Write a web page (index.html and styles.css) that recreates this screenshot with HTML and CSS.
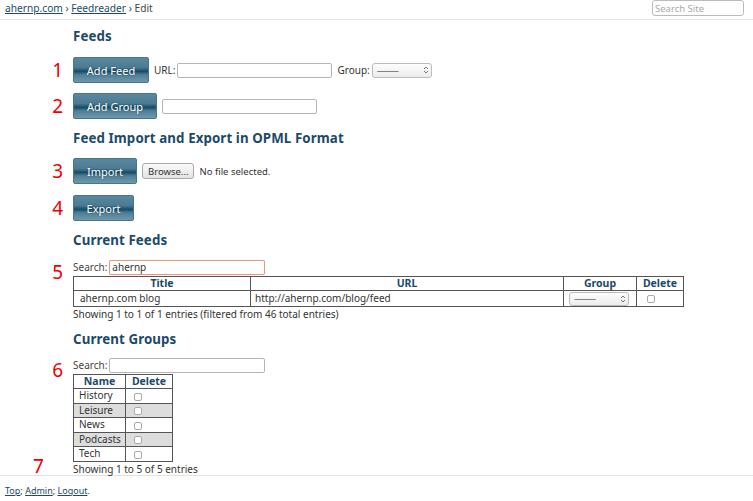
FILE: index.html
```html
<!DOCTYPE html>
<html>
<head>
<meta charset="utf-8">
<link rel="stylesheet" href="styles.css">
</head>
<body>
<header class="topbar">
  <nav class="crumbs"><a href="#">ahernp.com</a> › <a href="#">Feedreader</a> › Edit</nav>
  <input class="site-search" type="text" placeholder="Search Site">
</header>
<main class="content">
  <h2 class="h-feeds">Feeds</h2>
  <div class="row r1"><span class="num">1</span><span class="btn w-addfeed">Add Feed</span><span class="lbl">URL:</span><span class="field url-field"></span><span class="lbl">Group:</span><span class="select">———<svg width="6" height="10" viewBox="0 0 6 10"><path d="M1 4 L3 2 L5 4 M1 6 L3 8 L5 6" fill="none" stroke="#777" stroke-width="1"/></svg></span></div>
  <div class="row r2"><span class="num">2</span><span class="btn w-addgroup">Add Group</span><span class="field group-field"></span></div>
  <h2 class="h-import">Feed Import and Export in OPML Format</h2>
  <div class="row r3"><span class="num">3</span><span class="btn w-import">Import</span><span class="browse">Browse...</span><span class="nofile">No file selected.</span></div>
  <div class="row r4"><span class="num">4</span><span class="btn w-export">Export</span></div>
  <h2 class="h-current">Current Feeds</h2>
  <div class="search-row s1"><span class="num n5">5</span>Search: <span class="field search-field active">ahernp</span></div>
  <table class="grid feeds">
    <thead><tr><th class="c-title">Title</th><th class="c-url">URL</th><th class="c-group">Group</th><th class="c-del">Delete</th></tr></thead>
    <tbody><tr><td>ahernp.com blog</td><td>http://ahernp.com/blog/feed</td><td><span class="select small">———<svg width="6" height="10" viewBox="0 0 6 10"><path d="M1 4 L3 2 L5 4 M1 6 L3 8 L5 6" fill="none" stroke="#777" stroke-width="1"/></svg></span></td><td><span class="cb"></span></td></tr></tbody>
  </table>
  <p class="info">Showing 1 to 1 of 1 entries (filtered from 46 total entries)</p>
  <h2 class="h-groups">Current Groups</h2>
  <div class="search-row s2"><span class="num n6">6</span>Search: <span class="field search-field"></span></div>
  <table class="grid groups">
    <thead><tr><th class="c-name">Name</th><th class="c-gdel">Delete</th></tr></thead>
    <tbody>
      <tr><td>History</td><td><span class="cb"></span></td></tr>
      <tr class="alt"><td>Leisure</td><td><span class="cb"></span></td></tr>
      <tr><td>News</td><td><span class="cb"></span></td></tr>
      <tr class="alt"><td>Podcasts</td><td><span class="cb"></span></td></tr>
      <tr><td>Tech</td><td><span class="cb"></span></td></tr>
    </tbody>
  </table>
  <p class="info info2"><span class="num n7">7</span>Showing 1 to 5 of 5 entries</p>
</main>
<footer class="foot"><a href="#">Top</a>; <a href="#">Admin</a>; <a href="#">Logout</a>.</footer>
</body>
</html>
```
FILE: styles.css
```css
* { box-sizing: border-box; }
html, body { margin: 0; padding: 0; background: #fff; }
body {
  font-family: "Noto Sans", "Open Sans", "DejaVu Sans", sans-serif;
  font-size: 10px;
  color: #333;
}
a { color: #1c4a6a; text-decoration: underline; }

.topbar {
  height: 20px;
  border-bottom: 1px solid #e2e2e2;
  display: flex;
  justify-content: space-between;
  align-items: flex-start;
  padding: 0 9px 0 5px;
}
.crumbs { line-height: 16px; color: #444; font-size: 10.2px; }
.site-search {
  width: 92px; height: 16px; margin-top: 0;
  border: 1px solid #bbb; border-radius: 3px;
  font: 9.5px "Noto Sans", sans-serif; padding: 0 2px; color: #999;
}
.site-search::placeholder { color: #aaa; }

.content { padding-left: 73px; position: relative; }

h2 {
  margin: 0; font-size: 13.3px; font-weight: bold; color: #1c4a6a;
  line-height: 20px; letter-spacing: 0.1px;
}
.h-feeds { margin-top: 6px; }
.h-import { margin-top: 9px; }
.h-current { margin-top: 9px; }
.h-groups { margin-top: 8px; }

.row { display: flex; align-items: center; height: 26px; position: relative; }
.r1 { margin-top: 11px; }
.r2 { margin-top: 10px; }
.r3 { margin-top: 10px; }
.r4 { margin-top: 11px; }

.num {
  position: absolute; right: calc(100% + 10px); top: 50%;
  transform: translateY(-50%);
  color: #e00; font-size: 19px; line-height: 20px;
  font-family: "Noto Sans", sans-serif;
}

.btn {
  display: inline-flex; align-items: center; justify-content: center;
  height: 26px;
  color: #fff; font-size: 11px;
  border: 1px solid #46758c; border-radius: 2px;
  background: linear-gradient(to bottom, #5a889e 0%, #4b7b93 40%, #2a5c77 50%, #174b67 56%, #4e7f96 70%, #6e98ab 100%);
  text-shadow: 0 0 2px rgba(0,0,0,0.4);
  padding: 0 6px;
}
.w-addfeed { width: 76px; }
.w-addgroup { width: 84px; }
.w-import { width: 64px; }
.w-export { width: 61px; }

.lbl { margin: 0 2px 0 5px; color: #333; }
.field {
  display: inline-block; height: 15px; border: 1px solid #b5b5b5;
  border-radius: 2px; background: #fff;
}
.url-field { width: 155px; }
.group-field { width: 155px; margin-left: 5px; }

.select {
  display: inline-flex; align-items: center; justify-content: space-between;
  width: 60px; height: 15px; border: 1px solid #bbb; border-radius: 3px;
  background: linear-gradient(#fdfdfd, #ececec);
  padding: 0 2px 0 4px; font-size: 8px; color: #666; letter-spacing: -1px;
}
.select.small { width: 60px; height: 14px; margin-left: 1px; }

.browse {
  display: inline-flex; align-items: center; height: 16px;
  margin-left: 5px; padding: 0 5px;
  border: 1px solid #aaa; border-radius: 3px;
  background: linear-gradient(#fafafa, #e3e3e3);
  font-size: 9.5px; color: #333;
}
.nofile { margin-left: 5px; font-size: 9.5px; color: #333; }

.search-row {
  display: flex; align-items: center; height: 16px; position: relative;
  color: #444;
}
.search-row .field { margin-left: 2px; width: 156px; }
.s1 { margin-top: 9px; }
.s2 { margin-top: 8px; }
.search-field { line-height: 13px; padding-left: 2px; color: #333; }
.search-field.active { border-color: #e79a7d; box-shadow: 0 0 1px #f0b49a; }
.n5 { top: 13px; }
.n6 { top: 13px; }

.grid { border-collapse: collapse; margin-top: 1px; table-layout: fixed; }
.grid th, .grid td { border: 1px solid #555; padding: 0 4px; height: 14px; line-height: 13px; overflow: hidden; white-space: nowrap; }
.grid th { color: #1c4a6a; font-weight: bold; font-size: 10.5px; text-align: center; padding: 0 2px; }
.grid thead tr { border-bottom: 1px solid #111; }
.grid td { color: #333; }
.feeds td { height: 16px; }
.feeds td:first-child { padding-left: 6px; }
.c-title { width: 177px; }
.c-url { width: 313px; }
.c-group { width: 73px; }
.c-del { width: 47px; }
.c-name { width: 52px; }
.c-gdel { width: 47px; }
.groups td:first-child { padding-left: 5px; }
.groups tr.alt td { background: #ddd; }
.groups td { height: 14.5px; }

.cb {
  display: inline-block; width: 8px; height: 8px; border: 1px solid #aaa;
  border-radius: 2px; background: #fff; margin-left: 6px; vertical-align: middle;
}
.groups .cb { margin-left: 4px; }

.info { margin: 0; line-height: 14px; color: #333; position: relative; }
.info2 { height: 13px; }
.n7 { right: auto; left: -40px; top: 4px; }

.foot {
  border-top: 1px solid #e2e2e2;
  padding: 8px 5px 0;
  font-size: 9px;
  color: #333;
}
```
